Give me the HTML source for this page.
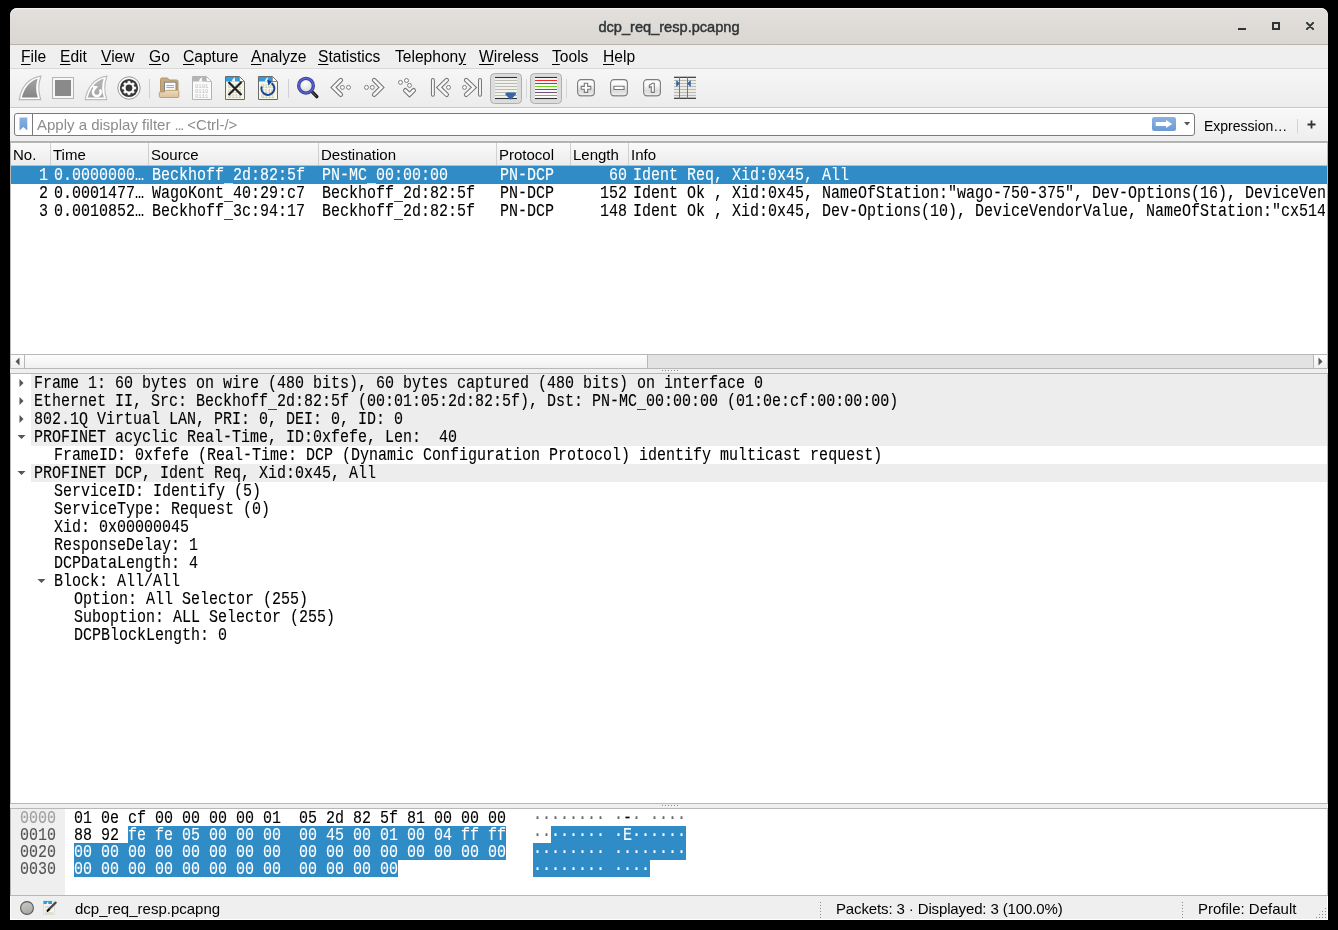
<!DOCTYPE html><html><head><meta charset="utf-8"><style>
*{margin:0;padding:0;box-sizing:border-box}
html,body{width:1338px;height:930px;overflow:hidden;background:#000}
body{position:relative;font-family:"Liberation Sans",sans-serif;color:#000}
.a{position:absolute}
#win{will-change:transform;position:absolute;left:10px;top:8px;width:1318px;height:912px;background:#efefef;border-radius:7px 7px 0 0;overflow:hidden}
#title{position:absolute;left:0;top:0;width:1318px;height:37px;background:linear-gradient(#e3e0dd,#dad6d2);border-bottom:1px solid #bcb4ac;border-radius:7px 7px 0 0;box-shadow:inset 0 1px 0 #f4f2f0}
#title .t{position:absolute;left:0;width:1318px;top:11px;text-align:center;font-weight:normal;font-size:14.6px;-webkit-text-stroke:0.45px #2e3436;color:#2e3436;line-height:16px}
#menu{position:absolute;left:0;top:37px;width:1318px;height:24px;background:#efefef;border-bottom:1px solid #d8d8d8}
#menu span{position:absolute;top:3px;font-size:15.6px;line-height:18px;color:#000}
#menu u{text-decoration:underline;text-decoration-thickness:1px;text-underline-offset:2px}
#tool{position:absolute;left:0;top:61px;width:1318px;height:39px;background:linear-gradient(#f6f6f6,#ececec);border-bottom:1px solid #c8c8c8}
#filt{position:absolute;left:0;top:100px;width:1318px;height:34px;background:linear-gradient(#f8f8f8,#eeeeee);border-top:1px solid #fdfdfd;border-bottom:1px solid #b2b2b2}
.mono{position:absolute;font-family:"Liberation Mono",monospace;font-size:15px;line-height:18px;white-space:pre;-webkit-text-stroke:0.1px currentColor;transform-origin:0 3.1px;transform:translateY(0.2px) scaleY(1.17)}
.hx{line-height:17px;transform-origin:0 2.6px;transform:translateY(0.3px) scaleY(1.17)}
.sel{color:#fff}
.hdr{position:absolute;top:1px;height:23px;font-size:15px;line-height:23px;color:#000}
.vs{position:absolute;top:1px;width:1px;height:22px;background:#d0d0d0}
</style></head><body><div id="win">
<div id="title"><div class="t">dcp_req_resp.pcapng</div>
<div class="a" style="left:1228px;top:20px;width:8px;height:2px;background:#2e3436"></div>
<div class="a" style="left:1262px;top:14px;width:8px;height:8px;border:2px solid #2e3436"></div>
<svg class="a" style="left:1296px;top:14px" width="8" height="8" viewBox="0 0 8 8"><path d="M0.9 0.9L7.1 7.1M7.1 0.9L0.9 7.1" stroke="#2e3436" stroke-width="2" stroke-linecap="round"/></svg>
</div>
<div id="menu"><span style="left:11px"><u>F</u>ile</span><span style="left:50px"><u>E</u>dit</span><span style="left:91px"><u>V</u>iew</span><span style="left:139px"><u>G</u>o</span><span style="left:173px"><u>C</u>apture</span><span style="left:241px"><u>A</u>nalyze</span><span style="left:308px"><u>S</u>tatistics</span><span style="left:385px">Telephon<u>y</u></span><span style="left:469px"><u>W</u>ireless</span><span style="left:542px"><u>T</u>ools</span><span style="left:593px"><u>H</u>elp</span></div>
<div id="tool"></div>
<div id="filt"></div>
<svg width="0" height="0" style="position:absolute"><defs>
<linearGradient id="gfin" x1="0" y1="0" x2="0" y2="1"><stop offset="0" stop-color="#a4a4a4"/><stop offset="1" stop-color="#858585"/></linearGradient>
<linearGradient id="gfin2" x1="0" y1="0" x2="0" y2="1"><stop offset="0" stop-color="#b4b4b4"/><stop offset="1" stop-color="#a6a6a6"/></linearGradient>
<linearGradient id="gbtn" x1="0" y1="0" x2="0" y2="1"><stop offset="0" stop-color="#ffffff"/><stop offset="0.35" stop-color="#f8f8f8"/><stop offset="0.7" stop-color="#dadada"/><stop offset="1" stop-color="#f2f2f2"/></linearGradient>
<linearGradient id="gfold" x1="0" y1="0" x2="0" y2="1"><stop offset="0" stop-color="#c9ad80"/><stop offset="1" stop-color="#b89a6c"/></linearGradient>
<linearGradient id="gfront" x1="0" y1="0" x2="0" y2="1"><stop offset="0" stop-color="#eddcc0"/><stop offset="1" stop-color="#dcc098"/></linearGradient>
<linearGradient id="gblue" x1="0" y1="0" x2="0" y2="1"><stop offset="0" stop-color="#8ab2e0"/><stop offset="1" stop-color="#6a9bd3"/></linearGradient>
<radialGradient id="glens" cx="0.45" cy="0.35" r="0.6"><stop offset="0" stop-color="#ffffff"/><stop offset="1" stop-color="#d8d8d8"/></radialGradient>
</defs></svg>
<svg class="a" style="left:8px;top:67px" width="25" height="26" viewBox="0 0 25 26"><path d="M1.3 24.6C3 13 10 3 22.9 1.2C20.3 8 20.3 17 22.7 24.6Z" fill="#fff" stroke="#b9b9b9" stroke-width="1.2"/><path d="M3.8 22.5C6 14 11 6 19.7 3.7C17.6 10 17.6 16 19.8 22.5Z" fill="url(#gfin)"/></svg>
<svg class="a" style="left:42px;top:69px" width="22" height="22" viewBox="0 0 22 22"><rect x="0.5" y="0.5" width="21" height="21" fill="#f7f7f7" stroke="#b5b5b5"/><rect x="3" y="3" width="16" height="16" fill="#8a8a8a"/></svg>
<svg class="a" style="left:74px;top:67px" width="25" height="26" viewBox="0 0 25 26"><path d="M1.3 24.6C3 13 10 3 22.9 1.2C20.3 8 20.3 17 22.7 24.6Z" fill="#fff" stroke="#bdbdbd" stroke-width="1.2"/><path d="M3.8 22.5C6 14 11 6 19.7 3.7C17.6 10 17.6 16 19.8 22.5Z" fill="url(#gfin2)"/><path d="M10.3 14.2A3.9 3.9 0 1 0 15.8 14.6" fill="none" stroke="#fff" stroke-width="2.5"/><path d="M8.4 10.4L14.2 11.4L9.9 16Z" fill="#fff"/></svg>
<svg class="a" style="left:107px;top:68px" width="24" height="24" viewBox="0 0 24 24"><circle cx="12" cy="12" r="11.2" fill="#fafafa" stroke="#9a9a9a" stroke-width="1"/><circle cx="12" cy="12" r="9.1" fill="#363636"/><polygon points="9.97,7.10 10.90,6.82 10.92,5.18 13.08,5.18 13.10,6.82 14.03,7.10 14.89,7.56 16.06,6.42 17.58,7.94 16.44,9.11 16.90,9.97 17.18,10.90 18.82,10.92 18.82,13.08 17.18,13.10 16.90,14.03 16.44,14.89 17.58,16.06 16.06,17.58 14.89,16.44 14.03,16.90 13.10,17.18 13.08,18.82 10.92,18.82 10.90,17.18 9.97,16.90 9.11,16.44 7.94,17.58 6.42,16.06 7.56,14.89 7.10,14.03 6.82,13.10 5.18,13.08 5.18,10.92 6.82,10.90 7.10,9.97 7.56,9.11 6.42,7.94 7.94,6.42 9.11,7.56" fill="#fff" stroke="#fff" stroke-width="0.5" stroke-linejoin="round"/><circle cx="12" cy="12" r="3.4" fill="#363636"/></svg>
<div class="a" style="left:139px;top:71px;width:1px;height:19px;background:#d0d0d0"></div>
<svg class="a" style="left:148px;top:69px" width="22" height="22" viewBox="0 0 22 22"><path d="M2.5 20.5V2.5Q2.5 1 4 1H9.5L11 3H18.5Q20 3 20 4.5V20.5Z" fill="url(#gfold)" stroke="#b39567" stroke-width="1"/><rect x="6.5" y="5.2" width="11.5" height="10" fill="#fff" stroke="#7f8284" stroke-width="1"/><path d="M8.3 8.6H16.2M8.3 10.6H16.2" stroke="#a0a39c" stroke-width="1"/><path d="M1.3 19.2V15.8Q1.3 15 2.2 15H6.5L8 13.3H19.8Q20.8 13.3 20.8 14.3V19.4Q20.8 20.5 19.7 20.5H2.6Q1.3 20.5 1.3 19.2Z" fill="url(#gfront)" stroke="#c0a272" stroke-width="1"/></svg>
<svg class="a" style="left:182px;top:68px" width="20" height="24" viewBox="0 0 20 24"><path d="M0.5 0.5H14.5L19.5 5.5V23.5H0.5Z" fill="#fbfbfb" stroke="#b2b2b2"/><path d="M1 1H14.3V5.5H1Z" fill="#b4b4b4"/><path d="M7 5.5C7.2 3.6 8.3 2.2 10.2 1.3C9.6 2.8 9.7 4.3 10.4 5.5Z" fill="#fff"/><path d="M14.3 1V5.5H19" fill="#fff" stroke="#b2b2b2" stroke-width="0.8"/><text x="3" y="12" font-family="Liberation Mono" font-size="5.6" fill="#bdbdbd">0101</text><text x="3" y="17" font-family="Liberation Mono" font-size="5.6" fill="#bdbdbd">0110</text><text x="3" y="22" font-family="Liberation Mono" font-size="5.6" fill="#bdbdbd">0111</text></svg>
<svg class="a" style="left:215px;top:68px" width="20" height="24" viewBox="0 0 20 24"><path d="M0.5 0.5H14.5L19.5 5.5V23.5H0.5Z" fill="#f8f6e6" stroke="#6a6a6a"/><path d="M1 1H14.3V5.5H1Z" fill="#2d9ee3"/><path d="M7 5.5C7.2 3.6 8.3 2.2 10.2 1.3C9.6 2.8 9.7 4.3 10.4 5.5Z" fill="#fff"/><path d="M14.3 1V5.5H19" fill="#fff" stroke="#6a6a6a" stroke-width="0.8"/><text x="3" y="12" font-family="Liberation Mono" font-size="5.6" fill="#b8b8b0">0101</text><text x="3" y="17" font-family="Liberation Mono" font-size="5.6" fill="#b8b8b0">0110</text><text x="3" y="22" font-family="Liberation Mono" font-size="5.6" fill="#b8b8b0">0111</text><path d="M3.5 6L16.5 19M16.5 6L3.5 19" stroke="#232323" stroke-width="2.2"/></svg>
<svg class="a" style="left:248px;top:68px" width="20" height="24" viewBox="0 0 20 24"><path d="M0.5 0.5H14.5L19.5 5.5V23.5H0.5Z" fill="#f8f6e6" stroke="#6a6a6a"/><path d="M1 1H14.3V5.5H1Z" fill="#2d9ee3"/><path d="M7 5.5C7.2 3.6 8.3 2.2 10.2 1.3C9.6 2.8 9.7 4.3 10.4 5.5Z" fill="#fff"/><path d="M14.3 1V5.5H19" fill="#fff" stroke="#6a6a6a" stroke-width="0.8"/><text x="3" y="12" font-family="Liberation Mono" font-size="5.6" fill="#b8b8b0">0101</text><text x="3" y="17" font-family="Liberation Mono" font-size="5.6" fill="#b8b8b0">0110</text><text x="3" y="22" font-family="Liberation Mono" font-size="5.6" fill="#b8b8b0">0111</text><path d="M13.6 7.2A6.4 6.4 0 1 1 3.8 10.5" fill="none" stroke="#1a4696" stroke-width="2.1"/><path d="M9 3.6L14.2 5.6L10.4 9.6Z" fill="#1a4696"/></svg>
<div class="a" style="left:278px;top:71px;width:1px;height:19px;background:#d0d0d0"></div>
<svg class="a" style="left:286px;top:68px" width="24" height="24" viewBox="0 0 24 24"><path d="M15 14.6L20.8 20.6" stroke="#1c1c1c" stroke-width="3.4" stroke-linecap="round"/><path d="M15.8 15.6L20 20" stroke="#6c6c6c" stroke-width="0.9" stroke-linecap="round"/><circle cx="10" cy="9.7" r="7.35" fill="url(#glens)" stroke="#2f429e" stroke-width="3.3"/><circle cx="10" cy="9.7" r="7.35" fill="none" stroke="#6464d2" stroke-width="1.2"/></svg>
<svg class="a" style="left:318px;top:68px" width="24" height="24" viewBox="0 0 24 24"><path d="M12.8 4.1L5.5 11.4L12.8 18.7" fill="none" stroke="#727272" stroke-width="4.6" stroke-linecap="round" stroke-linejoin="miter"/><path d="M12.8 4.1L5.5 11.4L12.8 18.7" fill="none" stroke="#f7f7f7" stroke-width="2.6" stroke-linecap="round" stroke-linejoin="miter"/><circle cx="14.4" cy="11.4" r="2.0" fill="#fafafa" stroke="#808080" stroke-width="1"/><circle cx="20.5" cy="11.4" r="2.0" fill="#fafafa" stroke="#808080" stroke-width="1"/></svg>
<svg class="a" style="left:352px;top:68px" width="24" height="24" viewBox="0 0 24 24"><path d="M12.2 4.1L19.5 11.4L12.2 18.7" fill="none" stroke="#727272" stroke-width="4.6" stroke-linecap="round" stroke-linejoin="miter"/><path d="M12.2 4.1L19.5 11.4L12.2 18.7" fill="none" stroke="#f7f7f7" stroke-width="2.6" stroke-linecap="round" stroke-linejoin="miter"/><circle cx="4.5" cy="11.4" r="2.0" fill="#fafafa" stroke="#808080" stroke-width="1"/><circle cx="10.3" cy="11.4" r="2.0" fill="#fafafa" stroke="#808080" stroke-width="1"/></svg>
<svg class="a" style="left:386px;top:68px" width="24" height="24" viewBox="0 0 24 24"><path d="M9.3 14.3L13.5 18.5L17.7 14.3" fill="none" stroke="#727272" stroke-width="4.6" stroke-linecap="round" stroke-linejoin="miter"/><path d="M9.3 14.3L13.5 18.5L17.7 14.3" fill="none" stroke="#f7f7f7" stroke-width="2.6" stroke-linecap="round" stroke-linejoin="miter"/><circle cx="4.5" cy="6.4" r="2.0" fill="#fafafa" stroke="#808080" stroke-width="1"/><circle cx="10.5" cy="4.5" r="2.0" fill="#fafafa" stroke="#808080" stroke-width="1"/><circle cx="13.5" cy="9.4" r="2.0" fill="#fafafa" stroke="#808080" stroke-width="1"/></svg>
<svg class="a" style="left:418px;top:68px" width="24" height="24" viewBox="0 0 24 24"><path d="M4.9 3.9V18.8" stroke="#727272" stroke-width="3.9" stroke-linecap="round"/><path d="M4.9 3.9V18.8" stroke="#f7f7f7" stroke-width="1.9" stroke-linecap="round"/><path d="M18.7 4.1L11.2 11.4L18.7 18.7" fill="none" stroke="#727272" stroke-width="4.6" stroke-linecap="round" stroke-linejoin="miter"/><path d="M18.7 4.1L11.2 11.4L18.7 18.7" fill="none" stroke="#f7f7f7" stroke-width="2.6" stroke-linecap="round" stroke-linejoin="miter"/><circle cx="20.5" cy="11.4" r="2.0" fill="#fafafa" stroke="#808080" stroke-width="1"/></svg>
<svg class="a" style="left:450px;top:68px" width="24" height="24" viewBox="0 0 24 24"><path d="M20 3.9V18.8" stroke="#727272" stroke-width="3.9" stroke-linecap="round"/><path d="M20 3.9V18.8" stroke="#f7f7f7" stroke-width="1.9" stroke-linecap="round"/><path d="M6.2 4.1L13.9 11.4L6.2 18.7" fill="none" stroke="#727272" stroke-width="4.6" stroke-linecap="round" stroke-linejoin="miter"/><path d="M6.2 4.1L13.9 11.4L6.2 18.7" fill="none" stroke="#f7f7f7" stroke-width="2.6" stroke-linecap="round" stroke-linejoin="miter"/><circle cx="4.5" cy="11.4" r="2.0" fill="#fafafa" stroke="#808080" stroke-width="1"/></svg>
<svg class="a" style="left:480px;top:65px" width="32" height="31" viewBox="0 0 32 31"><rect x="0.5" y="0.5" width="31" height="30" rx="4" fill="#dcdcdc" stroke="#aeaeae"/><rect x="5" y="4" width="22" height="22" fill="#f4f4f2"/><path d="M5 4.5 H27" stroke="#2e3436" stroke-width="1.1"/><path d="M5 7.5 H27" stroke="#b9bbb0" stroke-width="1.1"/><path d="M5 10.5 H27" stroke="#b9bbb0" stroke-width="1.1"/><path d="M5 13.5 H27" stroke="#b9bbb0" stroke-width="1.1"/><path d="M5 16.5 H27" stroke="#b9bbb0" stroke-width="1.1"/><path d="M5 19.5 H27" stroke="#b9bbb0" stroke-width="1.1"/><path d="M5 22.5 H27" stroke="#b9bbb0" stroke-width="1.1"/><path d="M5 25.5 H27" stroke="#2e3436" stroke-width="1.1"/><path d="M15.6 20.2Q16.2 19.6 17.5 19.6H24Q25.4 19.6 26 20.3Q26.4 21 25.6 21.8L21.2 26.2Q20.6 26.7 20 26.2L15.6 21.8Q15 21 15.6 20.2Z" fill="#3465a4"/></svg>
<div class="a" style="left:516px;top:71px;width:1px;height:19px;background:#d6d6d6"></div>
<svg class="a" style="left:520px;top:65px" width="32" height="31" viewBox="0 0 32 31"><rect x="0.5" y="0.5" width="31" height="30" rx="4" fill="#dcdcdc" stroke="#aeaeae"/><rect x="5" y="4" width="22" height="22" fill="#fff"/><path d="M5 4.5 H27" stroke="#2e3436" stroke-width="1.1"/><path d="M5 7.5 H27" stroke="#ef2929" stroke-width="1.1"/><path d="M5 10.5 H27" stroke="#3465a4" stroke-width="1.1"/><path d="M5 13.5 H27" stroke="#73d216" stroke-width="1.1"/><path d="M5 16.5 H27" stroke="#3465a4" stroke-width="1.1"/><path d="M5 19.5 H27" stroke="#75507b" stroke-width="1.1"/><path d="M5 22.5 H27" stroke="#c4a000" stroke-width="1.1"/><path d="M5 25.5 H27" stroke="#2e3436" stroke-width="1.1"/></svg>
<div class="a" style="left:556px;top:71px;width:1px;height:19px;background:#d6d6d6"></div>
<svg class="a" style="left:567px;top:71px" width="18" height="18" viewBox="0 0 18 18"><rect x="0.8" y="1.4" width="16.6" height="16" rx="3.5" fill="#9a9a9a" opacity="0.6"/><rect x="0.6" y="0.6" width="16.8" height="16.2" rx="3.5" fill="url(#gbtn)" stroke="#7c7c7c" stroke-width="1.1"/><path d="M7.3 4.3H10.7V7.4H13.8V10.3H10.7V13.4H7.3V10.3H4.2V7.4H7.3Z" fill="#fff" stroke="#777" stroke-width="1.1"/></svg>
<svg class="a" style="left:600px;top:71px" width="18" height="18" viewBox="0 0 18 18"><rect x="0.8" y="1.4" width="16.6" height="16" rx="3.5" fill="#9a9a9a" opacity="0.6"/><rect x="0.6" y="0.6" width="16.8" height="16.2" rx="3.5" fill="url(#gbtn)" stroke="#7c7c7c" stroke-width="1.1"/><path d="M3.9 7.3H14.1V10.5H3.9Z" fill="#fff" stroke="#777" stroke-width="1.1"/></svg>
<svg class="a" style="left:633px;top:71px" width="18" height="18" viewBox="0 0 18 18"><rect x="0.8" y="1.4" width="16.6" height="16" rx="3.5" fill="#9a9a9a" opacity="0.6"/><rect x="0.6" y="0.6" width="16.8" height="16.2" rx="3.5" fill="url(#gbtn)" stroke="#7c7c7c" stroke-width="1.1"/><path d="M6.3 6.2L9.4 4.2H11.3V13.4H8.3V7.6L6.3 8.6Z" fill="#fff" stroke="#777" stroke-width="1.1"/></svg>
<svg class="a" style="left:664px;top:68px" width="22" height="24" viewBox="0 0 22 24"><path d="M0 1.3 H22" stroke="#2e3436" stroke-width="1.2"/><path d="M0 4.5 H22" stroke="#b9bbb0" stroke-width="1.2"/><path d="M0 7.5 H22" stroke="#b9bbb0" stroke-width="1.2"/><path d="M0 10.5 H22" stroke="#b9bbb0" stroke-width="1.2"/><path d="M0 13.5 H22" stroke="#b9bbb0" stroke-width="1.2"/><path d="M0 16.5 H22" stroke="#b9bbb0" stroke-width="1.2"/><path d="M0 19.5 H22" stroke="#b9bbb0" stroke-width="1.2"/><path d="M0 22.3 H22" stroke="#2e3436" stroke-width="1.2"/><path d="M5.5 1V23M13.5 1V23" stroke="#6a6c68" stroke-width="0.9"/><path d="M2.2 5.2Q2 4.3 2.8 4.6L5.2 6.8Q6 7.5 5.2 8.3L2.8 10.6Q2 11 2.2 10Z" fill="#3465a4"/><path d="M16.8 5.2Q17 4.3 16.2 4.6L13.8 6.8Q13 7.5 13.8 8.3L16.2 10.6Q17 11 16.8 10Z" fill="#3465a4"/></svg>
<div class="a" style="left:4px;top:105px;width:1181px;height:23px;background:#fff;border:1px solid #7a7a7a;border-radius:3px"></div>
<div class="a" style="left:22px;top:106px;width:1px;height:21px;background:#7a7a7a"></div>
<svg class="a" style="left:9px;top:109px" width="9" height="14" viewBox="0 0 9 14"><path d="M0.5 0.5H8.3V13.5L4.4 10L0.5 13.5Z" fill="url(#gblue)"/></svg>
<div class="a" style="left:27px;top:107px;font-size:15px;line-height:20px;color:#8c8c8c">Apply a display filter <span style="letter-spacing:-1.3px">...</span> &lt;Ctrl-/&gt;</div>
<svg class="a" style="left:1142px;top:109px" width="24" height="14" viewBox="0 0 24 14"><rect x="0" y="0" width="24" height="14" rx="2.5" fill="url(#gblue)"/><path d="M3.7 5H14V3L20.2 7L14 11V9H3.7Z" fill="#fff"/></svg>
<svg class="a" style="left:1174px;top:114px" width="7" height="4" viewBox="0 0 7 4"><path d="M0 0H6.2L3.1 3.6Z" fill="#555"/></svg>
<div class="a" style="left:1194px;top:108px;font-size:14px;line-height:20px;color:#000">Expression…</div>
<div class="a" style="left:1287px;top:111px;width:1px;height:14px;background:#d4d4d4"></div>
<svg class="a" style="left:1297px;top:112px" width="9" height="9" viewBox="0 0 9 9"><path d="M4.5 0.5V8.5M0.5 4.5H8.5" stroke="#2e3436" stroke-width="1.8"/></svg>
<div class="a" style="left:0;top:134px;width:1318px;height:220px;background:#fff;border-left:1px solid #b8b8b8;border-right:1px solid #b8b8b8">
<div class="a" style="left:0;top:0;width:1316px;height:24px;background:linear-gradient(#fdfdfd,#f8f8f8 10%,#ededed);border-top:1px solid #b4b4b4;border-bottom:1px solid #c2bdb8"></div>
<div class="vs" style="left:39px"></div>
<div class="vs" style="left:137px"></div>
<div class="vs" style="left:307px"></div>
<div class="vs" style="left:485px"></div>
<div class="vs" style="left:559px"></div>
<div class="vs" style="left:617px"></div>
<div class="hdr" style="left:2px">No.</div>
<div class="hdr" style="left:42px">Time</div>
<div class="hdr" style="left:140px">Source</div>
<div class="hdr" style="left:310px">Destination</div>
<div class="hdr" style="left:488px">Protocol</div>
<div class="hdr" style="left:562px">Length</div>
<div class="hdr" style="left:620px">Info</div>
<div class="a" style="left:0;top:24px;width:1316px;height:18px;background:#308cc6"></div>
<div class="mono sel" style="left:28px;top:24px">1</div>
<div class="mono sel" style="left:43px;top:24px">0.0000000…</div>
<div class="a" style="left:213px;top:41px;width:9px;height:1px;background:#fff;opacity:0.75"></div>
<div class="mono sel" style="left:141px;top:24px">Beckhoff 2d:82:5f</div>
<div class="a" style="left:356px;top:41px;width:9px;height:1px;background:#fff;opacity:0.75"></div>
<div class="mono sel" style="left:311px;top:24px">PN-MC 00:00:00</div>
<div class="mono sel" style="left:489px;top:24px">PN-DCP</div>
<div class="mono sel" style="left:598px;top:24px">60</div>
<div class="mono sel" style="left:622px;top:24px;width:692px;overflow:hidden">Ident Req, Xid:0x45, All</div>
<div class="mono" style="left:28px;top:42px">2</div>
<div class="mono" style="left:43px;top:42px">0.0001477…</div>
<div class="a" style="left:213px;top:59px;width:9px;height:1px;background:#000;opacity:0.75"></div>
<div class="mono" style="left:141px;top:42px">WagoKont 40:29:c7</div>
<div class="a" style="left:383px;top:59px;width:9px;height:1px;background:#000;opacity:0.75"></div>
<div class="mono" style="left:311px;top:42px">Beckhoff 2d:82:5f</div>
<div class="mono" style="left:489px;top:42px">PN-DCP</div>
<div class="mono" style="left:589px;top:42px">152</div>
<div class="mono" style="left:622px;top:42px;width:692px;overflow:hidden">Ident Ok , Xid:0x45, NameOfStation:&quot;wago-750-375&quot;, Dev-Options(16), DeviceVendorValue</div>
<div class="mono" style="left:28px;top:60px">3</div>
<div class="mono" style="left:43px;top:60px">0.0010852…</div>
<div class="a" style="left:213px;top:77px;width:9px;height:1px;background:#000;opacity:0.75"></div>
<div class="mono" style="left:141px;top:60px">Beckhoff 3c:94:17</div>
<div class="a" style="left:383px;top:77px;width:9px;height:1px;background:#000;opacity:0.75"></div>
<div class="mono" style="left:311px;top:60px">Beckhoff 2d:82:5f</div>
<div class="mono" style="left:489px;top:60px">PN-DCP</div>
<div class="mono" style="left:589px;top:60px">148</div>
<div class="mono" style="left:622px;top:60px;width:692px;overflow:hidden">Ident Ok , Xid:0x45, Dev-Options(10), DeviceVendorValue, NameOfStation:&quot;cx5140&quot;</div>
</div>
<div class="a" style="left:0;top:346px;width:1318px;height:15px;background:#e3e3e3;border:1px solid #b8b8b8;border-width:1px 1px"></div>
<div class="a" style="left:0;top:346px;width:638px;height:15px;background:linear-gradient(#fdfdfd,#f0f0f0);border:1px solid #b8b8b8"></div>
<div class="a" style="left:14px;top:346px;width:1px;height:15px;background:#b8b8b8"></div>
<div class="a" style="left:1303px;top:346px;width:15px;height:15px;background:linear-gradient(#fdfdfd,#f0f0f0);border:1px solid #b8b8b8"></div>
<svg class="a" style="left:5px;top:349px" width="5" height="9"><path d="M4.5 0.5L0.5 4.5L4.5 8.5Z" fill="#555"/></svg>
<svg class="a" style="left:1308px;top:349px" width="5" height="9"><path d="M0.5 0.5L4.5 4.5L0.5 8.5Z" fill="#555"/></svg>
<div class="a" style="left:0;top:365px;width:1318px;height:1px;background:#b8b8b8"></div>
<div class="a" style="left:652px;top:362px;width:1px;height:1px;background:#8c8c8c;box-shadow:1px 1px 0 #fff"></div>
<div class="a" style="left:655px;top:362px;width:1px;height:1px;background:#8c8c8c;box-shadow:1px 1px 0 #fff"></div>
<div class="a" style="left:658px;top:362px;width:1px;height:1px;background:#8c8c8c;box-shadow:1px 1px 0 #fff"></div>
<div class="a" style="left:661px;top:362px;width:1px;height:1px;background:#8c8c8c;box-shadow:1px 1px 0 #fff"></div>
<div class="a" style="left:664px;top:362px;width:1px;height:1px;background:#8c8c8c;box-shadow:1px 1px 0 #fff"></div>
<div class="a" style="left:667px;top:362px;width:1px;height:1px;background:#8c8c8c;box-shadow:1px 1px 0 #fff"></div>
<div class="a" style="left:652px;top:797px;width:1px;height:1px;background:#8c8c8c;box-shadow:1px 1px 0 #fff"></div>
<div class="a" style="left:655px;top:797px;width:1px;height:1px;background:#8c8c8c;box-shadow:1px 1px 0 #fff"></div>
<div class="a" style="left:658px;top:797px;width:1px;height:1px;background:#8c8c8c;box-shadow:1px 1px 0 #fff"></div>
<div class="a" style="left:661px;top:797px;width:1px;height:1px;background:#8c8c8c;box-shadow:1px 1px 0 #fff"></div>
<div class="a" style="left:664px;top:797px;width:1px;height:1px;background:#8c8c8c;box-shadow:1px 1px 0 #fff"></div>
<div class="a" style="left:667px;top:797px;width:1px;height:1px;background:#8c8c8c;box-shadow:1px 1px 0 #fff"></div>
<div class="a" style="left:0;top:366px;width:1318px;height:430px;background:#fff;border-left:1px solid #b8b8b8;border-right:1px solid #b8b8b8;border-bottom:1px solid #b8b8b8;overflow:hidden">
<div class="a" style="left:20px;top:0px;width:1297px;height:18px;background:#ededed"></div>
<svg class="a" style="left:8px;top:0px" width="6" height="18"><path d="M0.5 5L4.5 9L0.5 13Z" fill="#555"/></svg>
<div class="mono" style="left:23px;top:0px">Frame 1: 60 bytes on wire (480 bits), 60 bytes captured (480 bits) on interface 0</div>
<div class="a" style="left:20px;top:18px;width:1297px;height:18px;background:#ededed"></div>
<svg class="a" style="left:8px;top:18px" width="6" height="18"><path d="M0.5 5L4.5 9L0.5 13Z" fill="#555"/></svg>
<div class="a" style="left:257px;top:35px;width:9px;height:1px;background:#000;opacity:0.75"></div>
<div class="a" style="left:626px;top:35px;width:9px;height:1px;background:#000;opacity:0.75"></div>
<div class="mono" style="left:23px;top:18px">Ethernet II, Src: Beckhoff 2d:82:5f (00:01:05:2d:82:5f), Dst: PN-MC 00:00:00 (01:0e:cf:00:00:00)</div>
<div class="a" style="left:20px;top:36px;width:1297px;height:18px;background:#ededed"></div>
<svg class="a" style="left:8px;top:36px" width="6" height="18"><path d="M0.5 5L4.5 9L0.5 13Z" fill="#555"/></svg>
<div class="mono" style="left:23px;top:36px">802.1Q Virtual LAN, PRI: 0, DEI: 0, ID: 0</div>
<div class="a" style="left:20px;top:54px;width:1297px;height:18px;background:#ededed"></div>
<svg class="a" style="left:6px;top:54px" width="9" height="18"><path d="M0.5 7L8.5 7L4.5 11Z" fill="#555"/></svg>
<div class="mono" style="left:23px;top:54px">PROFINET acyclic Real-Time, ID:0xfefe, Len:  40</div>
<div class="mono" style="left:43px;top:72px">FrameID: 0xfefe (Real-Time: DCP (Dynamic Configuration Protocol) identify multicast request)</div>
<div class="a" style="left:20px;top:90px;width:1297px;height:18px;background:#ededed"></div>
<svg class="a" style="left:6px;top:90px" width="9" height="18"><path d="M0.5 7L8.5 7L4.5 11Z" fill="#555"/></svg>
<div class="mono" style="left:23px;top:90px">PROFINET DCP, Ident Req, Xid:0x45, All</div>
<div class="mono" style="left:43px;top:108px">ServiceID: Identify (5)</div>
<div class="mono" style="left:43px;top:126px">ServiceType: Request (0)</div>
<div class="mono" style="left:43px;top:144px">Xid: 0x00000045</div>
<div class="mono" style="left:43px;top:162px">ResponseDelay: 1</div>
<div class="mono" style="left:43px;top:180px">DCPDataLength: 4</div>
<svg class="a" style="left:26px;top:198px" width="9" height="18"><path d="M0.5 7L8.5 7L4.5 11Z" fill="#555"/></svg>
<div class="mono" style="left:43px;top:198px">Block: All/All</div>
<div class="mono" style="left:63px;top:216px">Option: All Selector (255)</div>
<div class="mono" style="left:63px;top:234px">Suboption: ALL Selector (255)</div>
<div class="mono" style="left:63px;top:252px">DCPBlockLength: 0</div>
</div>
<div class="a" style="left:0;top:800px;width:1318px;height:1px;background:#b8b8b8"></div>
<div class="a" style="left:0;top:801px;width:1318px;height:87px;background:#fff;border-left:1px solid #b8b8b8;border-right:1px solid #b8b8b8;border-bottom:1px solid #b8b8b8;overflow:hidden">
<div class="a" style="left:0;top:0;width:54px;height:86px;background:#efefef"></div>
<div class="a" style="left:117px;top:17px;width:378px;height:17px;background:#308cc6"></div>
<div class="a" style="left:540px;top:17px;width:135px;height:17px;background:#308cc6"></div>
<div class="a" style="left:63px;top:34px;width:432px;height:17px;background:#308cc6"></div>
<div class="a" style="left:522px;top:34px;width:153px;height:17px;background:#308cc6"></div>
<div class="a" style="left:63px;top:51px;width:324px;height:17px;background:#308cc6"></div>
<div class="a" style="left:522px;top:51px;width:117px;height:17px;background:#308cc6"></div>
<div class="mono hx" style="left:9px;top:0px;;color:#a0a0a0">0000</div>
<div class="mono hx" style="left:63px;top:0px;">01 0e cf 00 00 00 00 01  05 2d 82 5f 81 00 00 00</div>
<div class="mono hx" style="left:522px;top:0px;;color:#666">········ · · ····</div>
<div class="mono hx" style="left:612px;top:0px;color:#000">-</div>
<div class="mono hx" style="left:9px;top:17px;;color:#555">0010</div>
<div class="mono hx" style="left:63px;top:17px;">88 92 </div>
<div class="mono hx sel" style="left:117px;top:17px;">fe fe 05 00 00 00  00 45 00 01 00 04 ff ff</div>
<div class="mono hx" style="left:522px;top:17px;;color:#666">··</div>
<div class="mono hx sel" style="left:540px;top:17px;">······ ·E······</div>
<div class="mono hx" style="left:9px;top:34px;;color:#555">0020</div>
<div class="mono hx sel" style="left:63px;top:34px;">00 00 00 00 00 00 00 00  00 00 00 00 00 00 00 00</div>
<div class="mono hx sel" style="left:522px;top:34px;">········ ········</div>
<div class="mono hx" style="left:9px;top:51px;;color:#555">0030</div>
<div class="mono hx sel" style="left:63px;top:51px;">00 00 00 00 00 00 00 00  00 00 00 00</div>
<div class="mono hx sel" style="left:522px;top:51px;">········ ····</div>
</div>
<div class="a" style="left:0;top:888px;width:1318px;height:24px;background:#efefef;border-bottom:1px solid #fff;border-right:1px solid #fff;border-left:1px solid #fafafa"></div>
<svg class="a" style="left:9px;top:892px" width="16" height="16" viewBox="0 0 16 16"><defs><linearGradient id="gcirc" x1="0" y1="0" x2="0.3" y2="1"><stop offset="0" stop-color="#cbcdc9"/><stop offset="1" stop-color="#a9aba7"/></linearGradient></defs><circle cx="8" cy="8" r="6.4" fill="url(#gcirc)" stroke="#575955" stroke-width="1.1"/></svg>
<svg class="a" style="left:32px;top:892px" width="16" height="16" viewBox="0 0 16 16"><rect x="1.5" y="1" width="11" height="13.5" fill="#f5f4ea" stroke="#d0d0c8" stroke-width="0.6"/><rect x="1.5" y="1" width="8.5" height="3" fill="#2a9be0"/><path d="M3 7H8M3 10H7M3 13H11" stroke="#c8c8c0" stroke-width="1"/><path d="M4.5 3.9C5 2.6 5.5 1.8 6.3 1.2C6 2.2 6.1 3.2 6.4 4Z" fill="#fff"/><path d="M6.6 9.8L13.6 2.6" stroke="#4a4a4a" stroke-width="2.3" stroke-linecap="round"/><path d="M5.6 10.9L6.8 9.6" stroke="#000" stroke-width="2.1" stroke-linecap="round"/></svg>
<div class="a" style="left:65px;top:892px;font-size:15px;line-height:18px">dcp_req_resp.pcapng</div>
<div class="a" style="left:810px;top:894px;width:1px;height:1px;background:#8a8a8a"></div>
<div class="a" style="left:810px;top:897px;width:1px;height:1px;background:#8a8a8a"></div>
<div class="a" style="left:810px;top:900px;width:1px;height:1px;background:#8a8a8a"></div>
<div class="a" style="left:810px;top:903px;width:1px;height:1px;background:#8a8a8a"></div>
<div class="a" style="left:810px;top:906px;width:1px;height:1px;background:#8a8a8a"></div>
<div class="a" style="left:810px;top:909px;width:1px;height:1px;background:#8a8a8a"></div>
<div class="a" style="left:1172px;top:894px;width:1px;height:1px;background:#8a8a8a"></div>
<div class="a" style="left:1172px;top:897px;width:1px;height:1px;background:#8a8a8a"></div>
<div class="a" style="left:1172px;top:900px;width:1px;height:1px;background:#8a8a8a"></div>
<div class="a" style="left:1172px;top:903px;width:1px;height:1px;background:#8a8a8a"></div>
<div class="a" style="left:1172px;top:906px;width:1px;height:1px;background:#8a8a8a"></div>
<div class="a" style="left:1172px;top:909px;width:1px;height:1px;background:#8a8a8a"></div>
<div class="a" style="left:826px;top:892px;font-size:15px;line-height:18px;letter-spacing:-0.13px">Packets: 3 · Displayed: 3 (100.0%)</div>
<div class="a" style="left:1188px;top:892px;font-size:15px;line-height:18px">Profile: Default</div>
<div class="a" style="left:1315px;top:900px;width:1px;height:1px;background:#8c8c8c"></div>
<div class="a" style="left:1312px;top:903px;width:1px;height:1px;background:#8c8c8c"></div>
<div class="a" style="left:1315px;top:903px;width:1px;height:1px;background:#8c8c8c"></div>
<div class="a" style="left:1309px;top:906px;width:1px;height:1px;background:#8c8c8c"></div>
<div class="a" style="left:1312px;top:906px;width:1px;height:1px;background:#8c8c8c"></div>
<div class="a" style="left:1315px;top:906px;width:1px;height:1px;background:#8c8c8c"></div>
<div class="a" style="left:1306px;top:909px;width:1px;height:1px;background:#8c8c8c"></div>
<div class="a" style="left:1309px;top:909px;width:1px;height:1px;background:#8c8c8c"></div>
<div class="a" style="left:1312px;top:909px;width:1px;height:1px;background:#8c8c8c"></div>
<div class="a" style="left:1315px;top:909px;width:1px;height:1px;background:#8c8c8c"></div>
</div></body></html>
